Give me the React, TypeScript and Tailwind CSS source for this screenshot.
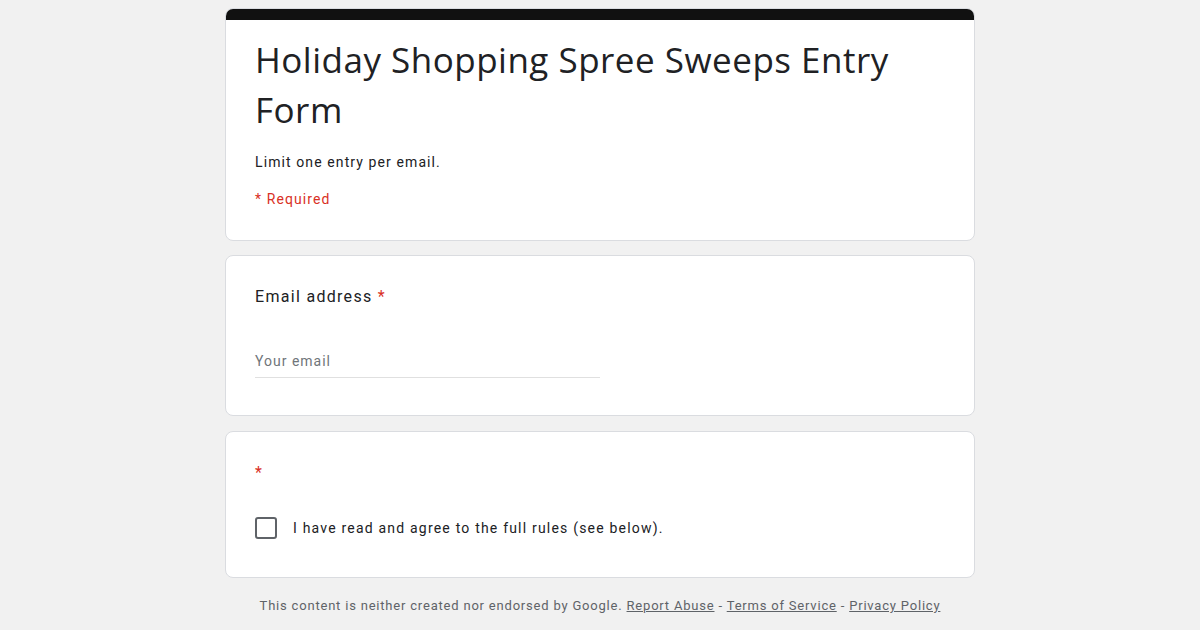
import React from 'react';

const Card: React.FC<{ children: React.ReactNode; className?: string }> = ({ children, className }) => (
  <div className={`bg-white border border-[#dadce0] rounded-lg ${className ?? ''}`}>{children}</div>
);

export default function App() {
  return (
    <div className="min-h-[630px] bg-[#f1f1f1] font-['Roboto',sans-serif] text-[#202124]">
      <div className="w-[750px] mx-auto pt-2 flex flex-col">
        {/* Header */}
        <div className="bg-white border border-[#dadce0] rounded-lg overflow-hidden">
          <div className="h-[11px] bg-[#111111]" />
          <div className="px-[29px] pt-[15px] pb-[31px]">
            <h1 className="font-['Open_Sans',sans-serif] text-[35px] leading-[50px] tracking-[0.5px] font-normal">
              Holiday Shopping Spree Sweeps Entry Form
            </h1>
            <p className="mt-[17px] text-[14px] leading-[20px] tracking-[1.1px]">Limit one entry per email.</p>
            <p className="mt-[17px] text-[14px] leading-[20px] tracking-[1.1px] text-[#d93025]">* Required</p>
          </div>
        </div>

        {/* Email */}
        <Card className="mt-[14px] px-[29px] pt-[29px] pb-[37px]">
          <div className="text-[16px] leading-[24px] tracking-[1.3px]">
            Email address <span className="text-[#d93025]">*</span>
          </div>
          <div className="mt-[42px] w-[345px] border-b border-[#e0e0e0] pb-[6px] text-[14px] leading-[20px] tracking-[1px] text-[#70757a]">
            Your email
          </div>
        </Card>

        {/* Rules checkbox */}
        <Card className="mt-[15px] px-[29px] pt-[29px] pb-[38px]">
          <div className="text-[16px] leading-[24px] text-[#d93025]">*</div>
          <label className="mt-[32px] flex items-center gap-[16px]">
            <span className="w-[22px] h-[22px] border-2 border-[#5f6368] rounded-[3px] shrink-0" />
            <span className="text-[14px] leading-[20px] tracking-[1.2px]">
              I have read and agree to the full rules (see below).
            </span>
          </label>
        </Card>

        {/* Footer */}
        <div className="pt-[20px] text-center text-[13px] leading-[16px] tracking-[0.8px] text-[#5f6368]">
          This content is neither created nor endorsed by Google.{' '}
          <a className="underline">Report Abuse</a> - <a className="underline">Terms of Service</a> -{' '}
          <a className="underline">Privacy Policy</a>
        </div>
      </div>
    </div>
  );
}
